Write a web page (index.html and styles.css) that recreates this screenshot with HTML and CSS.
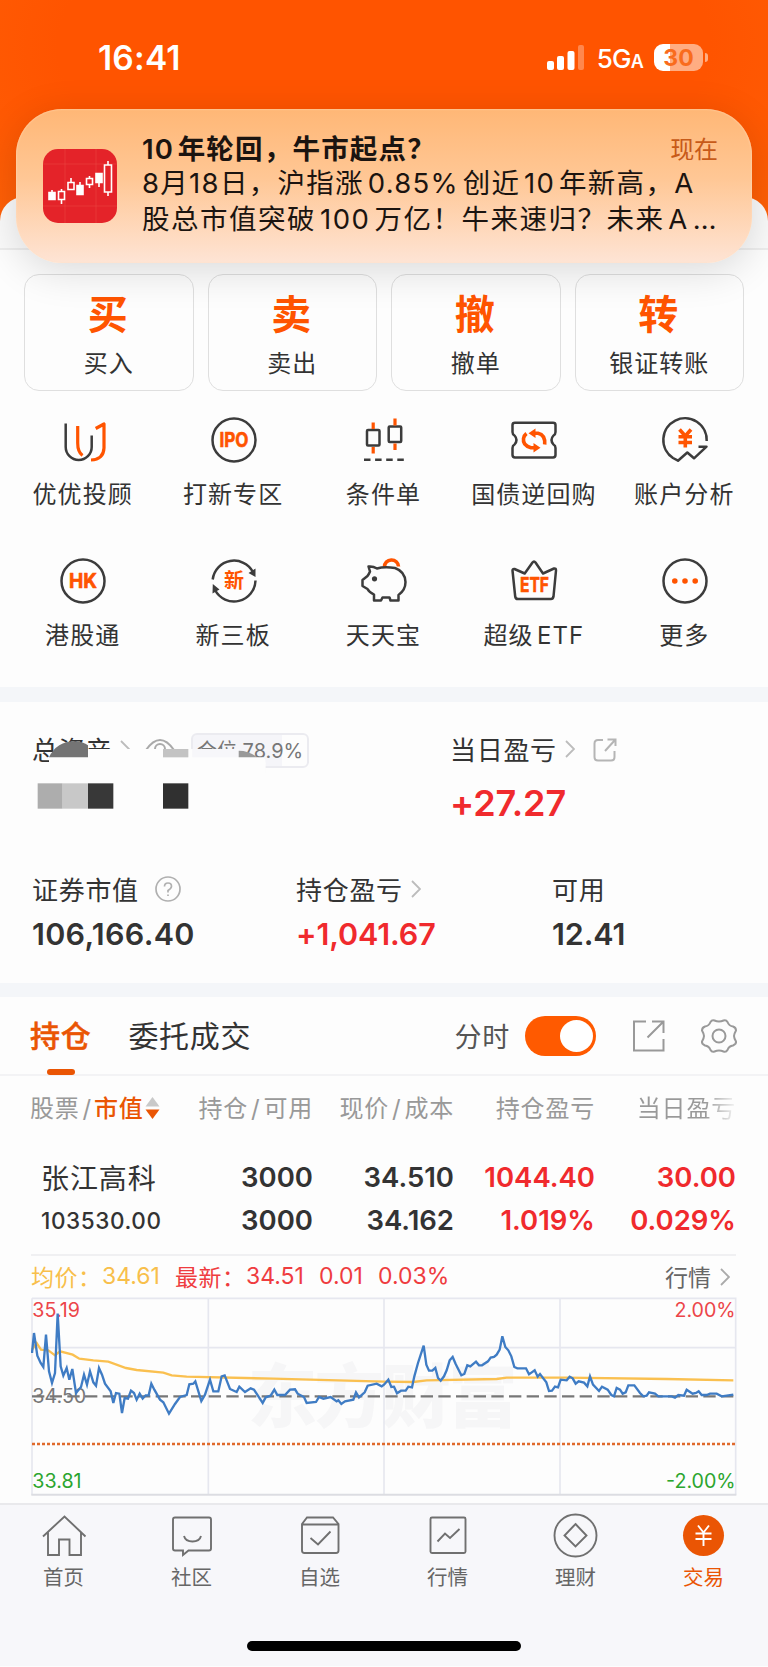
FILE: index.html
```html
<!DOCTYPE html>
<html lang="zh-CN">
<head>
    <meta charset="UTF-8">
    <meta name="viewport" content="width=device-width, initial-scale=1.0">
    <title>交易</title>
    <link rel="stylesheet" href="styles.css">
</head>
<body>
    <header class="top">
        <div class="status-bar">
            <span class="time">16:41</span>
            <div class="status-right">
                <svg class="signal" width="38" height="26" viewBox="0 0 38 26">
                    <rect x="0" y="16" width="7" height="9" rx="2"/>
                    <rect x="10" y="11" width="7" height="14" rx="2"/>
                    <rect x="20.500" y="6" width="7" height="19" rx="2"/>
                    <rect x="31" y="0" width="6" height="25" rx="2" opacity=".3"/>
                </svg>
                <span class="network">5G<small>A</small></span>
                <div class="battery"><span>30</span></div>
            </div>
        </div>
        <div class="notification">
            <svg class="app-icon" width="74" height="74" viewBox="0 0 74 74">
                <rect width="74" height="74" rx="15" fill="#e42329"/>
                <path d="M22 0V74M53 0V74M0 15H74M0 57H74" stroke="#ee4a45" stroke-width="1" opacity=".5"/>
                <g fill="#fff" stroke="#fff" stroke-width="1.600">
                    <path d="M6 43.500h6v7h-6zM9 41v3M34 36.500h6v9h-6zM37 33v4M53 24.500h6v9h-6zM56 33v5"/>
                    <path fill="none" d="M15.500 42.500h6v8h-6zM18.500 40v2M18.500 51v4M25 33.500h6v7h-6zM28 29v4M43.500 29.500h6v6h-6zM46.500 27v2M46.500 36v3M61.500 16h7v27h-7zM65 12v4M65 43v4"/>
                </g>
            </svg>
            <div class="note-text">
                <div class="note-head"><strong>10&#8202;年轮回，牛市起点？</strong><span>现在</span></div>
                <p class="line-a">8月18日，沪指涨&#8202;0.85%&#8202;创近&#8202;10&#8202;年新高，A</p>
                <p class="line-b">股总市值突破&#8202;100&#8202;万亿！牛来速归？未来&#8202;A&#8202;…</p>
            </div>
        </div>
    </header>

    <main>
        <section class="trade">
            <div class="trade-cards">
                <a class="trade-card"><b>买</b><span>买入</span></a>
                <a class="trade-card"><b>卖</b><span>卖出</span></a>
                <a class="trade-card"><b>撤</b><span>撤单</span></a>
                <a class="trade-card"><b>转</b><span>银证转账</span></a>
            </div>

            <div class="menu">
                <a class="menu-item">
                    <svg class="icon" viewBox="0 0 48 48">
                        <path d="M6.700 7.500V31a13 13 0 0 0 26 0V19.500"/>
                        <path class="o" d="M18.700 10V27Q18.700 36 23.500 39.500M36.700 12.500L45 8V32Q44.500 43.500 32 44"/>
                    </svg>
                    <span>优优投顾</span>
                </a>
                <a class="menu-item">
                    <svg class="icon" viewBox="0 0 48 48">
                        <circle cx="24" cy="24" r="21.500"/>
                        <text x="24" y="31" textLength="29" lengthAdjust="spacingAndGlyphs">IPO</text>
                    </svg>
                    <span>打新专区</span>
                </a>
                <a class="menu-item">
                    <svg class="icon" viewBox="0 0 48 48">
                        <rect x="7" y="14" width="12.500" height="15.500" rx="1"/>
                        <rect x="28.700" y="10.500" width="12.500" height="15.500" rx="1"/>
                        <path class="o" d="M13.200 6.500V13M13.200 31V37.500M35 2.500V9.500M35 27.500V34"/>
                        <path d="M4 43.700H44" stroke-dasharray="6.500 4.600"/>
                    </svg>
                    <span>条件单</span>
                </a>
                <a class="menu-item">
                    <svg class="icon" viewBox="0 0 48 48">
                        <path d="M5 6.800H43Q45.500 6.800 45.500 9V16Q45.500 18.500 43.500 19.500Q39.500 24 43.500 28.500Q45.500 29.500 45.500 32V39Q45.500 41.400 43 41.400H5Q2.500 41.400 2.500 39V32Q2.500 29.500 4.500 28.500Q8.500 24 4.500 19.500Q2.500 18.500 2.500 16V9Q2.500 6.800 5 6.800Z"/>
                        <path class="o thick" d="M24 17.300H28Q35.500 19 34.700 28.500M25 31.700H21Q12.500 29.500 13.500 22.500Q14 19.500 16.500 17.500"/>
                        <path class="of" d="M25.500 12.500V22L18.500 17.300ZM23.500 27V36.500L30.500 31.700Z"/>
                    </svg>
                    <span>国债逆回购</span>
                </a>
                <a class="menu-item">
                    <svg class="icon" viewBox="0 0 48 48">
                        <path d="M45.700 25A21.700 21.700 0 1 0 12 42L17 44.700L26.300 36.500L33 42.300L45.500 30.700H37.500"/>
                        <path class="o thick" d="M18.500 13.500L24.300 20L30 13.500M24.300 20V31.500M17.500 20.700H31M17.500 26.500H31"/>
                    </svg>
                    <span>账户分析</span>
                </a>
                <a class="menu-item">
                    <svg class="icon" viewBox="0 0 48 48">
                        <circle cx="24" cy="24" r="21.500"/>
                        <text x="24" y="31" textLength="28" lengthAdjust="spacingAndGlyphs">HK</text>
                    </svg>
                    <span>港股通</span>
                </a>
                <a class="menu-item">
                    <svg class="icon" viewBox="0 0 48 48">
                        <path d="M2.700 22.500A21.500 21.500 0 0 1 43 15M45.500 23.500A21.500 21.500 0 0 1 5 33"/>
                        <path class="df" stroke="none" d="M38.500 16L45.500 11.500V20ZM2.500 36.500L2.800 27L9.500 32.500Z"/>
                        <text class="xin" x="24" y="31">新</text>
                    </svg>
                    <span>新三板</span>
                </a>
                <a class="menu-item">
                    <svg class="icon" viewBox="0 0 48 48">
                        <path class="o thick" d="M24.500 10A7 6.800 0 0 1 38.500 9.500"/>
                        <path d="M2.500 23L7.500 19Q9 17 10 14.500L8.500 9.500Q13 9 17 11.500Q24 9.500 35 11Q45 14.500 45.500 25Q45.500 33 38.500 38V43.500H30.500L29.500 40.500H22.500L21 43.500H14V37.500Q9 35 7.500 32L2.500 29Z"/>
                        <circle class="df" cx="14.500" cy="21.800" r="2.600" stroke="none"/>
                    </svg>
                    <span>天天宝</span>
                </a>
                <a class="menu-item">
                    <svg class="icon" viewBox="0 0 48 48">
                        <path d="M2.500 13.500Q2.500 11.500 4.500 12L14.700 16.500L22.500 5.500Q24 3.500 25.500 5.500L33 16.500L44 11.500Q46 11 46 13.500L43.500 39.500Q43 42 41 42H8Q5.500 42 5.200 39.500Z"/>
                        <text x="24.500" y="35" textLength="29" lengthAdjust="spacingAndGlyphs">ETF</text>
                    </svg>
                    <span>超级&#8202;ETF</span>
                </a>
                <a class="menu-item">
                    <svg class="icon" viewBox="0 0 48 48">
                        <circle cx="24" cy="24" r="21.500"/>
                        <path class="of" d="M11 24a2.800 2.800 0 1 0 5.600 0a2.800 2.800 0 1 0-5.600 0M21.200 24a2.800 2.800 0 1 0 5.600 0a2.800 2.800 0 1 0-5.600 0M31.400 24a2.800 2.800 0 1 0 5.600 0a2.800 2.800 0 1 0-5.600 0"/>
                    </svg>
                    <span>更多</span>
                </a>
            </div>
        </section>

        <section class="assets">
            <div class="asset-top">
                <div class="total">
                    <div class="label">总资产
                        <svg class="chev" viewBox="0 0 10 18"><path d="M1 1l8 8-8 8"/></svg>
                        <svg class="eye" width="30" height="24" viewBox="0 0 30 24"><path d="M1 12Q15-8 29 12Q15 32 1 12Z"/><circle cx="15" cy="11" r="5"/></svg>
                        <span class="position">仓位 78.9%</span>
                    </div>
                    <!-- privacy mask over the total -->
                    <svg class="mask" viewBox="0 0 1020 390">
                        <path fill="#fdfdfd" d="M147 112L190 72H264V87H716V92L770 112H790Q797 118 797 130V160H900V320H100V130H147Z"/>
                        <path fill="#f7f7fa" d="M577 87H716V112H577Z"/>
                        <path fill="#747474" d="M147 112Q170 64 225 64Q250 66 264 76V112Z"/>
                        <path fill="#c3c3c3" d="M489 87H565V112H489Z"/>
                        <path fill="#999" d="M716 92Q748 92 772 112H716Z"/>
                        <path fill="#adadad" d="M113 190H188V266H113Z"/>
                        <path fill="#c8c8c8" d="M188 190H264V266H188Z"/>
                        <path fill="#383838" d="M264 190H340V266H264Z"/>
                        <path fill="#303030" d="M489 190H565V266H489Z"/>
                    </svg>
                </div>
                <div class="today">
                    <div class="label">当日盈亏
                        <svg class="chev" viewBox="0 0 10 18"><path d="M1 1l8 8-8 8"/></svg>
                        <svg class="share-sm" width="24" height="24" viewBox="0 0 24 24"><path d="M10 2H5Q1.500 2 1.500 5.500V19Q1.500 22.500 5 22.500H18Q21.500 22.500 21.500 19V13M14.500 1.500H22.500V8M22 2L12 13"/></svg>
                    </div>
                    <div class="big red">+27.27</div>
                </div>
            </div>
            <div class="asset-grid">
                <div>
                    <div class="label">证券市值
                        <svg class="help" width="26" height="26" viewBox="0 0 26 26"><circle cx="13" cy="13" r="12"/><path d="M9.500 10.500Q9.500 7 13 7T16.500 10.300Q16.500 12.500 13 14.500V16.500M13 18.500V20"/></svg>
                    </div>
                    <div class="value wide">106,166.40</div>
                </div>
                <div>
                    <div class="label">持仓盈亏
                        <svg class="chev" viewBox="0 0 10 18"><path d="M1 1l8 8-8 8"/></svg>
                    </div>
                    <div class="value red">+1,041.67</div>
                </div>
                <div>
                    <div class="label">可用</div>
                    <div class="value">12.41</div>
                </div>
            </div>
        </section>

        <section class="holdings">
            <div class="tabs">
                <a class="tab active">持仓</a>
                <a class="tab">委托成交</a>
                <span class="switch-label">分时</span>
                <span class="switch"></span>
                <svg class="share" width="34" height="34" viewBox="0 0 34 34"><path d="M14 2.500H2V31.500H31.500V20M20 2.500H31.500V14M31 3L15.500 18.500"/></svg>
                <svg class="gear" width="38" height="38" viewBox="0 0 38 38"><path d="M14.500 3.500Q19 5.500 23.500 3.500Q26 2.500 27.500 5Q29 9 33 9.500Q36 10.500 36 13.500Q34 17 34 19Q34 21 36 24.500Q36.500 27 33 28.500Q29 29 27.500 33Q26 35.500 23.500 34.500Q19 32.500 14.500 34.500Q12 35.500 10.500 33Q9 29 5 28.500Q1.500 27 2 24.500Q4 21 4 19Q4 17 2 13.500Q2 10.500 5 9.500Q9 9 10.500 5Q12 2.500 14.500 3.500Z"/><circle cx="19" cy="19" r="6.500"/></svg>
            </div>
            <div class="row head">
                <span>股票&#8202;/<em>市值</em><svg class="sort" width="15" height="22" viewBox="0 0 15 22"><path fill="#c9c9c9" d="M7.500 0L14.500 9.500H.500Z"/><path fill="#ea5504" d="M7.500 22L14.500 12.500H.500Z"/></svg></span>
                <span>持仓&#8202;/&#8202;可用</span>
                <span>现价&#8202;/&#8202;成本</span>
                <span>持仓盈亏</span>
                <span class="fade">当日盈亏</span>
            </div>
            <div class="row stock first">
                <span class="name">张江高科</span>
                <span>3000</span>
                <span>34.510</span>
                <span class="red">1044.40</span>
                <span class="red">30.00</span>
            </div>
            <div class="row stock">
                <span class="amount">103530.00</span>
                <span>3000</span>
                <span>34.162</span>
                <span class="red">1.019%</span>
                <span class="red">0.029%</span>
            </div>
            <div class="quote">
                <span class="avg n0">均价：</span><span class="avg n1">34.61</span>
                <span class="last n0">最新：</span><span class="last n2">34.51</span>
                <span class="last n3">0.01</span>
                <span class="last">0.03%</span>
                <span class="more">行情</span>
                <svg class="chev" viewBox="0 0 10 18"><path d="M1 1l8 8-8 8"/></svg>
            </div>
            <svg class="chart" viewBox="93 142 2118 597">
                <text class="watermark" x="1148" y="518" textLength="810">东方财富</text>
                <path class="grid" d="M96 146H2207V735M625 146V735M1152 146V735M1680 146V735M96 294H2207M96 146V735"/>
                <path class="bottom" d="M94 735H2209"/>
                <text x="97" y="201" class="t-red">35.19</text>
                <text x="2207" y="201" class="t-red end">2.00%</text>
                <text x="97" y="459" class="t-gray">34.50</text>
                <text x="97" y="715" class="t-green">33.81</text>
                <text x="2207" y="715" class="t-green end">-2.00%</text>
                <path class="mid" d="M96 440H2207"/>
                <path class="cost" d="M96 583H2207"/>
                <polyline class="yellow" points="96,300 110,280 123,300 145,302 165,317 180,305 218,315 238,327 280,332 325,336 378,355 410,361 490,369 515,377 560,381 820,387 1152,396 1240,397 1280,392 1490,388 1520,384 1700,384 2000,388 2200,392"/>
                <polyline class="blue" points="96,310 102,250 112,318 122,340 130,352 138,255 147,365 156,400 165,370 173,192 182,350 190,378 200,355 208,390 217,358 228,430 243,412 252,375 261,405 270,365 280,398 288,408 297,355 306,375 315,402 332,425 340,460 348,430 358,432 366,490 374,445 384,447 393,423 402,430 410,450 419,432 428,447 437,437 446,437 454,402 463,420 480,450 490,458 507,492 525,463 540,442 560,436 568,404 580,402 586,395 604,454 615,435 630,390 640,425 655,425 665,380 674,377 690,418 710,427 718,411 735,427 752,416 762,420 788,460 797,443 812,438 823,420 832,436 855,436 870,420 885,419 893,432 912,442 920,460 948,457 957,442 970,447 992,442 1010,455 1015,452 1024,463 1035,455 1060,450 1068,428 1077,443 1094,428 1103,408 1130,402 1145,410 1152,405 1165,390 1174,412 1182,411 1191,431 1203,423 1217,423 1225,411 1236,413 1243,380 1254,340 1271,288 1279,345 1287,363 1297,363 1306,355 1314,385 1322,393 1332,380 1340,362 1349,332 1358,322 1367,343 1384,377 1393,373 1402,347 1411,350 1428,336 1437,347 1446,347 1464,335 1472,324 1482,322 1490,315 1499,300 1507,260 1516,292 1525,302 1534,320 1543,352 1552,356 1578,356 1587,374 1604,362 1613,381 1620,373 1639,398 1647,424 1656,423 1665,411 1674,413 1682,390 1700,392 1709,381 1718,386 1727,402 1736,395 1752,399 1762,410 1770,380 1779,405 1797,424 1806,411 1823,420 1834,436 1842,440 1850,415 1860,420 1868,432 1877,428 1885,407 1903,407 1920,430 1930,440 1940,438 1947,428 1965,432 1975,440 2015,440 2025,444 2035,436 2052,438 2060,420 2078,432 2088,430 2096,425 2105,436 2120,436 2130,432 2150,432 2165,440 2180,438 2200,435"/>
            </svg>
        </section>
    </main>

    <nav class="tabbar">
        <a><svg viewBox="0 0 48 48"><path d="M3 24.500L24.500 4.500L45.500 24.500M8 20.500V43H19V27.500H29.500V43H41V20.500"/></svg>首页</a>
        <a><svg viewBox="0 0 48 48"><path d="M7 5.500H41Q43 5.500 43 7.500V36.500Q43 38.500 41 38.500H20.500L15 43V38.500H7Q5 38.500 5 36.500V7.500Q5 5.500 7 5.500ZM16 24Q17.500 29.500 24.500 29.500T33 24"/></svg>社区</a>
        <a><svg viewBox="0 0 48 48"><path d="M6 12L11 5.500H37L42.500 12V38.500Q42.500 41 40 41H8.500Q6 41 6 38.500ZM6 12.500H42.500M14.500 26L22 32.500L34.500 19.500"/></svg>自选</a>
        <a><svg viewBox="0 0 48 48"><path d="M8 5.500H40Q41.500 5.500 41.500 7V39.500Q41.500 41 40 41H8Q6.500 41 6.500 39.500V7Q6.500 5.500 8 5.500ZM13.500 29.500L21 21.500L26 26L35.500 17"/></svg>行情</a>
        <a><svg viewBox="0 0 48 48"><circle cx="23.500" cy="23.500" r="21"/><path d="M23.500 12L34.500 23.500L23.500 34.500L12.500 23.500Z"/></svg>理财</a>
        <a class="current"><svg viewBox="0 0 48 48"><circle cx="23.500" cy="23.500" r="20.500" fill="#ea5504" stroke="none"/><path stroke="#fff" d="M18 13.500L23.500 20.500L29 13.500M23.500 20.500V34M15.500 21.500H31.500M15.500 27H31.500"/></svg>交易</a>
        <div class="home-indicator"></div>
    </nav>
</body>
</html>
```
FILE: styles.css
```css
* {
    box-sizing: border-box;
}

body {
    width: 768px;
    height: 1667px;
    margin: 0;
    overflow: hidden;
    font-family: Inter, "Noto Sans CJK SC", sans-serif;
    color: #333;
    background: #fdfdfd;
}

p {
    margin: 0;
}

svg {
    fill: none;
    flex: none;
}

.red {
    color: #f02a2d;
}

/* Status bar and notification */
.top {
    height: 232px;
    background: radial-gradient(ellipse at 50% 20%, #ff5400 60%, #ff6208);
}

.status-bar {
    display: flex;
    justify-content: space-between;
    align-items: center;
    height: 109px;
    padding: 6px 60px 0 98px;
    color: #fff;
}

.time {
    font-size: 33.500px;
    font-weight: 600;
    letter-spacing: 0.2px;
}

.status-right {
    display: flex;
    align-items: center;
}

.signal {
    fill: #fff;
}

.network {
    margin: 1px 11px 0 12px;
    font-size: 26px;
    font-weight: 500;
    letter-spacing: -0.8px;
}

.network small {
    font-size: 18px;
    font-weight: 600;
}

.battery {
    position: relative;
    width: 49px;
    height: 27px;
    border-radius: 9px;
    background: linear-gradient(90deg, #fff 32%, #ffad82 32%);
    text-align: center;
    font-size: 23px;
    line-height: 28px;
    font-weight: 700;
    color: #f96c1d;
    margin-right: 5px;
}

.battery::after {
    content: "";
    position: absolute;
    right: -5px;
    top: 9px;
    width: 3px;
    height: 9px;
    border-radius: 0 3px 3px 0;
    background: #ffad82;
}

.notification {
    position: relative;
    z-index: 2;
    display: flex;
    width: 736px;
    height: 154px;
    margin-left: 16px;
    padding: 23px 35px 0 27px;
    border-radius: 46px;
    background: linear-gradient(180deg, #ffb776, #ffc795 45%, #fee4d5);
    box-shadow: 0 8px 40px rgba(0, 0, 0, .14), inset 0 0 2px #ffe0c4;
    color: #1b1410;
}

.app-icon {
    margin: 17px 25px 0 0;
}

.note-text {
    flex: 1;
    font-size: 27.500px;
    line-height: 35.500px;
    white-space: nowrap;
}

.note-head {
    display: flex;
    justify-content: space-between;
    height: 34px;
}

.note-head strong {
    font-weight: 600;
    letter-spacing: 1.2px;
}

.note-head span {
    font-size: 24px;
    color: #c75a18;
}

.line-a {
    letter-spacing: 1.3px;
}

.line-b {
    letter-spacing: 1.5px;
}

/* Trade entry */
.trade {
    height: 490px;
    margin-top: -35px;
    padding-top: 77px;
    border-radius: 24px 24px 0 0;
    background: linear-gradient(#fafafa 51px, #ededed 51px, #ededed 53px, #fdfdfd 53px);
}

.trade-cards {
    display: grid;
    grid-template-columns: repeat(4, 1fr);
    gap: 14px;
    padding: 0 24px;
}

.trade-card {
    display: flex;
    flex-direction: column;
    align-items: center;
    height: 117px;
    border: 1.500px solid #dfdfdf;
    border-radius: 15px;
}

.trade-card b {
    margin: 10px 2px 0 0;
    font-size: 40px;
    line-height: 60px;
    color: #ff5400;
}

.trade-card span {
    margin-top: 1px;
    font-size: 24px;
    line-height: 36px;
    letter-spacing: 1px;
}

.menu {
    display: grid;
    grid-template-columns: repeat(5, 1fr);
    grid-auto-rows: 141px;
    padding: 25px 8px 0;
}

.menu-item {
    display: flex;
    flex-direction: column;
    align-items: center;
    font-size: 24px;
    line-height: 36px;
}

.menu-item span {
    margin: 13px 1px 0 0;
    letter-spacing: 1.1px;
}

.icon {
    width: 48px;
    height: 48px;
    stroke: #3c3c3c;
    stroke-width: 2.500;
    stroke-linejoin: round;
}

.icon .o {
    stroke: #ff5400;
    stroke-width: 3.200;
}

.icon .thick {
    stroke-width: 3.600;
}

.icon .of {
    fill: #ff5400;
    stroke: none;
}

.icon .df {
    fill: #3c3c3c;
}

.icon text {
    fill: #ff5400;
    stroke: #ff5400;
    stroke-width: .6;
    font-size: 19.500px;
    font-weight: 700;
    text-anchor: middle;
}

.icon .xin {
    font-size: 20px;
    stroke: none;
}

/* Assets */
.assets {
    height: 310px;
    border-top: 15px solid #f4f6f9;
    border-bottom: 14px solid #f4f6f9;
}

.asset-top {
    display: flex;
    height: 160px;
    padding: 27px 0 0 32px;
}

.total {
    position: relative;
    width: 418px;
}

.label {
    display: flex;
    align-items: center;
    height: 38px;
    font-size: 26px;
    letter-spacing: 0.7px;
}

.chev {
    width: 10px;
    height: 18px;
    margin: 1px 0 0 8px;
    stroke: #bcbcbc;
    stroke-width: 1.800;
}

.eye {
    margin: 4px 0 0 15px;
    stroke: #aaa;
    stroke-width: 2;
}

.position {
    margin: 4px 0 0 16px;
    width: 118px;
    height: 35px;
    border: 2px solid #ebebf0;
    border-radius: 6px;
    background: linear-gradient(90deg, #f5f5f9 78%, #fdfdfd 78%);
    text-align: center;
    font-size: 20px;
    line-height: 32px;
    letter-spacing: 0;
    color: #777;
}

.mask {
    position: absolute;
    left: -32px;
    top: -9px;
    width: 340px;
    height: 130px;
}

.share-sm {
    margin: 3px 0 0 18px;
    stroke: #b5b5b5;
    stroke-width: 2;
}

.big {
    margin-top: 14px;
    font-size: 36px;
    line-height: 44px;
    font-weight: 600;
    letter-spacing: -0.1px;
}

.asset-grid {
    display: grid;
    grid-template-columns: 264px 256px 1fr;
    padding: 7px 0 0 32px;
}

.help {
    margin: 2px 0 0 16px;
    stroke: #b0b0b0;
    stroke-width: 1.700;
}

.value {
    margin-top: 8px;
    font-size: 30.500px;
    line-height: 38px;
    font-weight: 600;
    letter-spacing: -0.1px;
}

.value.wide {
    letter-spacing: 0.3px;
}

/* Holdings */
.tabs {
    display: flex;
    align-items: center;
    height: 79px;
    padding: 0 30px 0 30px;
    border-bottom: 2px solid #f3f3f5;
    font-size: 30px;
}

.tab {
    position: relative;
    margin-right: 37px;
    padding-top: 1px;
    line-height: 77px;
    letter-spacing: 0.7px;
}

.tab.active {
    font-weight: 500;
    color: #ea5504;
    -webkit-text-stroke: 0.5px #ea5504;
}

.tab.active::after {
    content: "";
    position: absolute;
    left: 17px;
    bottom: 0;
    width: 28px;
    height: 6px;
    border-radius: 3px;
    background: #ea5504;
}

.switch-label {
    margin-left: auto;
    font-size: 27px;
    letter-spacing: 0.7px;
    color: #555;
}

.switch {
    width: 71px;
    height: 40px;
    margin-left: 15px;
    padding: 4px 3px;
    border-radius: 20px;
    background: #ff5a00;
}

.switch::after {
    content: "";
    display: block;
    width: 33px;
    height: 32px;
    margin-left: auto;
    border-radius: 50%;
    background: #fff;
}

.share {
    margin-left: 36px;
    stroke: #999;
    stroke-width: 2;
}

.gear {
    margin-left: 34px;
    stroke: #999;
    stroke-width: 2;
}

.row {
    display: grid;
    grid-template-columns: 144px 139px 141px 141px 141px;
    align-items: center;
    padding-left: 30px;
    text-align: right;
    white-space: nowrap;
}

.row span:first-child {
    text-align: left;
}

.head {
    height: 60px;
    font-size: 24px;
    letter-spacing: 0.8px;
    color: #999;
}

.head em {
    margin-left: 2px;
    font-style: normal;
    font-weight: 500;
    color: #ea5504;
}

.sort {
    margin-left: 1px;
    vertical-align: -2px;
}

.fade {
    background: linear-gradient(90deg, #999 78%, #f4f4f4);
    background-clip: text;
    -webkit-background-clip: text;
    color: transparent;
}

.stock {
    height: 42px;
    font-size: 27.500px;
    font-weight: 600;
}

.stock.first {
    margin: 20px 0 1px;
}

.stock .name {
    padding-left: 11px;
    font-size: 28px;
    font-weight: 400;
    letter-spacing: 0.9px;
}

.stock .amount {
    padding-left: 11px;
    font-size: 22.500px;
    font-weight: 500;
    letter-spacing: 0.6px;
}

.quote {
    display: flex;
    align-items: center;
    height: 43px;
    margin: 13px 32px 0 31px;
    border-top: 2px solid #f0f0f2;
    font-size: 23px;
    color: #666;
}

.quote span {
    margin-top: -1px;
}

.avg {
    color: #f8bf4b;
}

.last {
    color: #ef3c3f;
}

.quote .n0 {
    width: 71px;
    letter-spacing: 0.5px;
}

.n1,
.n2 {
    width: 73px;
}

.n3 {
    width: 59px;
}

.quote .more {
    margin-left: auto;
}

.quote .chev {
    margin: 0 6px 0 9px;
    stroke: #aaa;
}

.chart {
    display: block;
    width: 706px;
    height: 199px;
    margin-left: 31px;
    font-size: 59px;
}

.chart .grid {
    stroke: #e6e7ef;
    stroke-width: 5;
}

.chart .bottom {
    stroke: #dcdde2;
    stroke-width: 6;
}

.chart .mid {
    stroke: #777;
    stroke-width: 7;
    stroke-dasharray: 37 16;
}

.chart .cost {
    stroke: #e06a2c;
    stroke-width: 7;
    stroke-dasharray: 9 6;
}

.chart .yellow {
    stroke: #fac050;
    stroke-width: 7;
}

.chart .blue {
    stroke: #3f7cc4;
    stroke-width: 7;
}

.watermark {
    fill: #f6f6f7;
    font-size: 208px;
    font-weight: 900;
    text-anchor: middle;
}

.t-red {
    fill: #ec4549;
}

.t-gray {
    fill: #777;
}

.t-green {
    fill: #2ba52e;
}

.end {
    text-anchor: end;
}

/* Bottom navigation */
.tabbar {
    display: grid;
    grid-template-columns: repeat(6, 1fr);
    grid-template-rows: 136px 1fr;
    height: 163px;
    margin-top: 7px;
    border-top: 2px solid #e9e9ec;
    background: #f7f7fa;
}

.tabbar a {
    display: flex;
    flex-direction: column;
    align-items: center;
    gap: 2px;
    padding: 7px 1px 0 0;
    font-size: 20.500px;
    line-height: 32px;
    color: #666;
}

.tabbar svg {
    width: 48px;
    height: 48px;
    stroke: #707070;
    stroke-width: 1.900;
}

.tabbar .current {
    color: #ea5504;
}

.home-indicator {
    grid-column: 1 / -1;
    justify-self: center;
    width: 274px;
    height: 10px;
    border-radius: 5px;
    background: #000;
}
```
